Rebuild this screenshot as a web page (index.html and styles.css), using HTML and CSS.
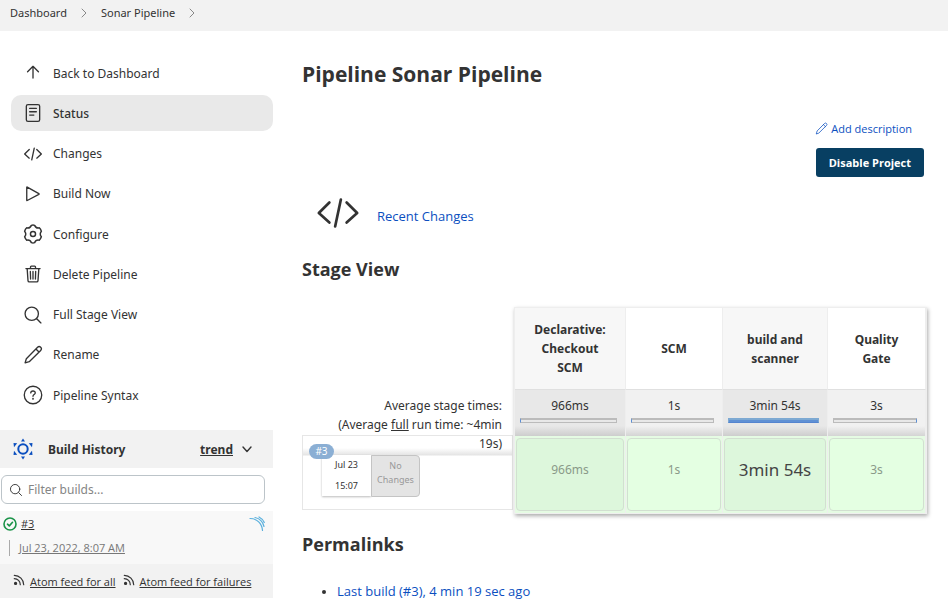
FILE: index.html
```html
<!DOCTYPE html>
<html lang="en">
<head>
<meta charset="utf-8">
<meta name="viewport" content="width=device-width, initial-scale=1">
<title>Sonar Pipeline</title>
<link rel="stylesheet" href="styles.css">
</head>
<body>
<svg class="sprite" aria-hidden="true">
  <symbol id="chevron" viewBox="0 0 10 10"><path d="M3 1l4 4-4 4"/></symbol>
  <symbol id="code" viewBox="0 0 24 24"><path d="M7.500 6.500L2 12l5.500 5M16.500 6.500L22 12l-5.500 5M13.500 5l-3 14"/></symbol>
  <symbol id="search" viewBox="0 0 24 24"><circle cx="10.500" cy="10.500" r="8"/><path d="M16.500 16.500l5 5"/></symbol>
  <symbol id="pencil" viewBox="0 0 24 24"><path d="M2.500 21.500l1.500-5L17.500 2.800a2.500 2.500 0 0 1 3.700 3.700L7.500 20zM15.500 4.700l3.700 3.700"/></symbol>
  <symbol id="feed" viewBox="0 0 14 14"><path d="M1.500 1.500c6 0 11 5 11 11M1.500 5.500c4 0 7 3 7 7"/><circle cx="3" cy="11" r="1.200" fill="currentColor"/></symbol>
</svg>

<nav class="breadcrumbs" aria-label="Breadcrumb">
  <a href="#">Dashboard</a>
  <svg class="crumb-sep"><use href="#chevron"/></svg>
  <a href="#">Sonar Pipeline</a>
  <svg class="crumb-sep"><use href="#chevron"/></svg>
</nav>

<div class="page">
  <aside class="side">
    <nav class="tasks" aria-label="Tasks">
      <a class="task" href="#"><svg class="icon" viewBox="0 0 24 24"><path d="M5.500 10.500L12 4l6.500 6.500M12 4.500V18"/></svg>Back to Dashboard</a>
      <a class="task task-active" href="#" aria-current="page"><svg class="icon" viewBox="0 0 24 24"><rect x="4" y="2" width="16" height="20" rx="2"/><path d="M8 6.500h8M8 10.500h8M8 14.500h5"/></svg>Status</a>
      <a class="task" href="#"><svg class="icon"><use href="#code"/></svg>Changes</a>
      <a class="task" href="#"><svg class="icon" viewBox="0 0 24 24"><path d="M4.500 4v15.500q0 .6.600.300L19 12.500q.6-.5 0-1L5.100 3.700q-.6-.3-.6.300z"/></svg>Build Now</a>
      <a class="task" href="#"><svg class="icon" viewBox="-11 -11 22 22"><path d="M-1.800-9.500Q0-10.300 1.800-9.500 3.200-5.900 6.900-6.800 8.400-5.500 9.200-3.100 6.700 0 9.200 3.100 8.400 5.500 6.900 6.800 3.200 5.900 1.800 9.500 0 10.300-1.800 9.500-3.200 5.900-6.900 6.800-8.400 5.500-9.200 3.100-6.700 0-9.200-3.100-8.400-5.500-6.900-6.800-3.200-5.900-1.800-9.500z"/><circle r="2.800"/></svg>Configure</a>
      <a class="task" href="#"><svg class="icon" viewBox="0 0 24 24"><path d="M3.500 5.500h17M5 5.500l1 14.500q.1 1.500 1.500 1.500h9q1.400 0 1.500-1.500l1-14.500M9 5.500v-2q0-1 1-1h4q1 0 1 1v2M12 9v9M8.800 9l.3 9M15.200 9l-.3 9"/></svg>Delete Pipeline</a>
      <a class="task" href="#"><svg class="icon"><use href="#search"/></svg>Full Stage View</a>
      <a class="task" href="#"><svg class="icon"><use href="#pencil"/></svg>Rename</a>
      <a class="task" href="#"><svg class="icon" viewBox="0 0 24 24"><circle cx="12" cy="12" r="10.500"/><path d="M9.300 9.500c.2-3.200 5.500-3 5.400 0-.1 2-2.700 1.900-2.700 4"/><circle cx="12" cy="16.500" r=".4"/></svg>Pipeline Syntax</a>
    </nav>

    <section class="history">
      <header class="history-head">
        <svg class="history-icon" viewBox="-11 -11 22 22"><circle r="4.700"/><path d="M0-10.500l2 3h-4zM0 10.500l2-3h-4zM9.500-6L9-1.800 5.800-5.800zM9.500 6L9 1.800 5.800 5.800zM-9.500-6L-9-1.800-5.800-5.800zM-9.500 6L-9 1.800-5.800 5.800z"/></svg>
        <h2 class="history-title">Build History</h2>
        <a class="trend" href="#">trend</a>
        <svg class="trend-arrow" viewBox="0 0 12 12"><path d="M2 4l4 4.500L10 4"/></svg>
      </header>
      <div class="filter">
        <svg class="filter-icon"><use href="#search"/></svg>
        <input class="filter-input" type="text" placeholder="Filter builds..." aria-label="Filter builds">
      </div>
      <div class="build">
        <div class="build-line">
          <svg class="ok" viewBox="0 0 14 14"><circle cx="7" cy="7" r="6"/><path d="M4.500 7.200l1.800 1.700 3.200-3.600"/></svg>
          <a class="build-link" href="#">#3</a>
          <svg class="sonar" viewBox="0 0 16 16"><path d="M1 2.500c7 0 12 5 12.500 12M6 1.500c4.500 1 8 4.500 9 9M10 1c2.500 1.300 4.300 3 5.300 5.500"/></svg>
        </div>
        <div class="build-time"><a href="#">Jul 23, 2022, 8:07 AM</a></div>
      </div>
      <footer class="feeds">
        <svg class="feed-icon"><use href="#feed"/></svg><a href="#">Atom feed for all</a>
        <svg class="feed-icon"><use href="#feed"/></svg><a href="#">Atom feed for failures</a>
      </footer>
    </section>
  </aside>

  <main class="main">
    <h1 class="title">Pipeline Sonar Pipeline</h1>
    <div class="actions">
      <a class="describe" href="#"><svg class="describe-icon"><use href="#pencil"/></svg>Add description</a>
      <button class="disable" type="button">Disable Project</button>
    </div>
    <a class="recent" href="#"><svg class="recent-icon"><use href="#code"/></svg><span class="recent-text">Recent Changes</span></a>

    <h2 class="heading">Stage View</h2>
    <div class="stages">
      <div class="runs">
        <p class="average">Average stage times:<br>(Average <u>full</u> run time: ~4min 19s)</p>
        <div class="run">
          <span class="run-id">#3</span>
          <div class="run-info">
            <div class="run-date"><span>Jul 23</span><span>15:07</span></div>
            <div class="run-changes">No Changes</div>
          </div>
        </div>
      </div>
      <table class="stage-table">
        <colgroup><col class="col-a"><col class="col-b"><col class="col-c"><col class="col-d"></colgroup>
        <thead>
          <tr><th scope="col">Declarative: Checkout SCM</th><th scope="col">SCM</th><th scope="col">build and scanner</th><th scope="col">Quality Gate</th></tr>
        </thead>
        <tbody>
          <tr class="totals">
            <td>966ms<div class="bar bar-start"></div></td>
            <td>1s<div class="bar bar-start"></div></td>
            <td>3min 54s<div class="bar bar-full"></div></td>
            <td>3s<div class="bar bar-end"></div></td>
          </tr>
          <tr class="results">
            <td><div class="cell">966ms</div></td>
            <td><div class="cell">1s</div></td>
            <td><div class="cell cell-long">3min 54s</div></td>
            <td><div class="cell">3s</div></td>
          </tr>
        </tbody>
      </table>
    </div>

    <h2 class="heading permalinks">Permalinks</h2>
    <ul class="links">
      <li><a href="#">Last build (#3), 4 min 19 sec ago</a></li>
    </ul>
  </main>
</div>
</body>
</html>
```
FILE: styles.css
```css
* { box-sizing: border-box; }
body {
  margin: 0;
  background: #fff;
  color: #333;
  font: 12px/19px "Noto Sans", "Open Sans", sans-serif;
}
a { color: inherit; }
h1, h2, p, ul { margin: 0; padding: 0; }
svg { flex: none; fill: none; stroke: currentColor; stroke-linecap: round; stroke-linejoin: round; }
.sprite { display: none; }

.breadcrumbs {
  display: flex;
  align-items: center;
  height: 31px;
  padding: 0 10px 6px;
  background: #f2f2f2;
  font-size: 11px;
}
.breadcrumbs a { text-decoration: none; }
.crumb-sep { width: 10px; height: 10px; margin: 0 12px; color: #888; }

.page { display: flex; align-items: flex-start; }
.side { flex: none; width: 273px; padding-top: 24px; }
.tasks {
  display: flex;
  flex-direction: column;
  justify-content: space-between;
  min-height: 358px;
  padding-left: 11px;
}
.task {
  display: flex;
  align-items: center;
  gap: 10px;
  height: 36px;
  padding: 0 12px;
  border-radius: 10px;
  text-decoration: none;
}
.task-active { background: #e9e9e9; font-weight: 500; }
.icon { width: 20px; height: 20px; stroke-width: 1.6; }

.history { margin-top: 17px; background: #f2f2f2; }
.history-head { display: flex; align-items: center; height: 38px; padding: 0 20px 0 12px; }
.history-icon { width: 22px; height: 22px; color: #0b4fbf; stroke-width: 2; }
.history-icon path { fill: currentColor; stroke: none; }
.history-title { margin-left: 14px; font-size: 12px; line-height: 19px; }
.trend { margin-left: auto; font-weight: 700; }
.trend-arrow { width: 12px; height: 12px; margin-left: 8px; stroke-width: 1.4; }
.filter { position: relative; padding: 7px 8px 7px 1px; background: #fff; }
.filter-icon { position: absolute; left: 9px; top: 15px; width: 14px; height: 14px; stroke-width: 1.6; }
.filter-input {
  display: block;
  width: 100%;
  height: 29px;
  padding: 0 10px 0 26px;
  border: 1px solid #bcc4c9;
  border-radius: 6px;
  background: #fff;
  font: inherit;
}
.filter-input::placeholder { color: #858585; }
.build, .feeds { font-family: "Open Sans", "Noto Sans", sans-serif; font-size: 11px; }
.build { height: 53px; padding: 3px 8px 0 3px; background: #f8f8f8; }
.build-line { display: flex; align-items: center; gap: 4px; }
.ok { width: 14px; height: 14px; color: #1a9348; stroke-width: 1.6; }
.sonar { width: 16px; height: 16px; margin-left: auto; color: #5ab0dd; stroke-width: 1.2; }
.build-time {
  margin: 7px 0 0 6px;
  padding-left: 9px;
  border-left: 1px solid #aaa;
  color: #777;
  line-height: 16px;
}
.feeds { display: flex; align-items: center; height: 34px; padding-left: 13px; }
.feed-icon { width: 12px; height: 12px; margin: 0 5px 3px 0; stroke-width: 1.4; }
.feeds a + .feed-icon { margin-left: 7px; }

.main { flex: 1; min-width: 0; padding: 28px 21px 0 29px; }
.title { font-size: 21px; line-height: 30px; }
.title, .heading { font-family: "Open Sans", "Noto Sans", sans-serif; font-weight: 700; }
.actions {
  display: flex;
  flex-direction: column;
  align-items: flex-end;
  gap: 10px;
  margin-top: 30px;
  padding-right: 3px;
  font-family: "Open Sans", "Noto Sans", sans-serif;
  font-size: 11px;
}
.describe { display: flex; align-items: center; gap: 3px; margin-right: 12px; color: #0b4fbf; text-decoration: none; }
.describe-icon { width: 13px; height: 13px; stroke-width: 1.4; }
.disable {
  height: 29px;
  padding: 0 13px;
  border: 0;
  border-radius: 3px;
  background: #083f62;
  color: #fff;
  font: inherit;
  font-weight: 700;
}
.recent {
  display: inline-flex;
  align-items: center;
  gap: 16px;
  margin: 12px 0 0 13px;
  color: #0b4fbf;
  font-family: "Open Sans", "Noto Sans", sans-serif;
  font-size: 13px;
  text-decoration: none;
}
.recent-icon { width: 46px; height: 48px; color: #333; stroke-width: 1.4; }
.recent-text { padding-top: 6px; }
.heading { font-size: 18px; line-height: 26px; }
.main > .heading { margin-top: 14px; }

.stages { display: flex; margin-top: 25px; }
.runs { flex: 1; display: flex; flex-direction: column; padding: 89px 1px 0 0; }
.average { margin-bottom: -18px; padding: 0 11px 0 30px; text-align: right; }
.run {
  height: 75px;
  border: 1px solid #e6e6e6;
  padding: 8px 0 0 6px;
  background: linear-gradient(#fff0 12px, #e4e4e4 19px, #fff0 20px);
}
.run-id {
  position: relative;
  display: block;
  width: 25px;
  border-radius: 8px;
  background: #8bafd4;
  color: #fff;
  font-size: 10px;
  line-height: 15px;
  text-align: center;
}
.run-info { display: flex; margin: -4px 0 0 13px; line-height: 14px; text-align: center; }
.run-date {
  display: flex;
  flex-direction: column;
  justify-content: space-around;
  width: 49px;
  height: 41px;
  background: #fff;
  box-shadow: 0 1px 2px #0004;
  font-size: 9px;
}
.run-changes {
  width: 49px;
  height: 42px;
  padding: 3px 0;
  border: 1px solid #c4c4c4;
  border-radius: 0 4px 4px 0;
  background: #e4e4e4;
  color: #999;
  font-size: 9px;
}
.stage-table {
  flex: none;
  width: 413px;
  border: 1px solid #eee;
  border-spacing: 0;
  table-layout: fixed;
  box-shadow: 1px 2px 4px #0005;
  text-align: center;
}
.col-a { width: 111px; }
.col-b { width: 97px; }
.col-c { width: 105px; }
.stage-table th, .stage-table td { padding: 0; border-right: 1px solid #eee; }
.stage-table th { height: 82px; padding: 0 18px; border-bottom: 1px solid #e0e0e0; }
.stage-table th:nth-child(odd) { background: #f7f7f7; }
.totals td { height: 46px; background: linear-gradient(#f1f1f1 36px, #d4d4d4); vertical-align: top; padding: 6px 0 0; }
.totals td:nth-child(odd) { background: linear-gradient(#e8e8e8 36px, #cdcdcd); }
.bar {
  height: 5px;
  margin: 3px 8px 0 5px;
  border: 1px solid #bbb;
  border-top-width: 2px;
  background: #e8e8e8;
}
.bar-start { border-left-color: #5c8fd6; }
.bar-end { border-right-color: #5c8fd6; }
.bar-full { border-color: #7da9d2 #7da9d2 #5484cf; background: #5f90d4; }
.results td { height: 77px; padding: 2px 1px; background: #e5fbe3; }
.cell {
  height: 73px;
  border: 1px solid #d2dfd1;
  border-radius: 4px;
  background: #e4ffe2;
  color: #8a9a89;
  line-height: 62px;
}
.results td:nth-child(odd) .cell { background: #ddf7dc; }
.results .cell-long { color: #444; font-size: 17px; }

.main > .permalinks { margin-top: 17px; }
.links { margin: 25px 0 0; padding-left: 35px; font-family: "Open Sans", "Noto Sans", sans-serif; font-size: 13px; }
.links a { color: #0b4fbf; text-decoration: none; }
.links ::marker { font-size: 11px; }
```
